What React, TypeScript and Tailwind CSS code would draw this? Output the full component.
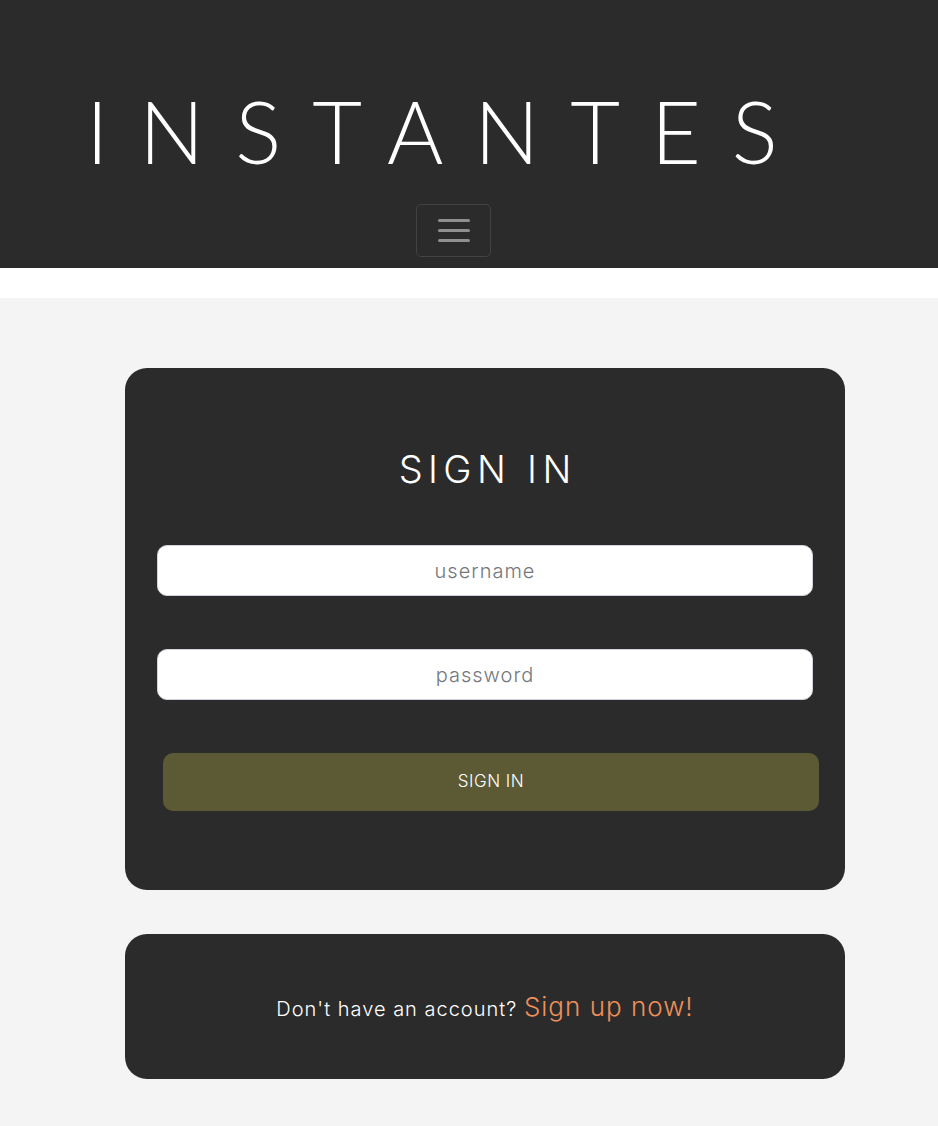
import React from "react";

export default function App() {
  const body = { fontFamily: "Inter, 'Noto Sans', sans-serif" };
  return (
    <div className="min-h-[1126px] bg-[#f4f4f4]" style={body}>
      <header className="h-[268px] bg-[#2b2b2b] flex flex-col">
        <div className="pt-[88px] pl-[86px]">
          <h1
            className="text-white text-[86px] leading-none font-light tracking-[0.36em] whitespace-nowrap"
            style={{ fontFamily: "Lato, Inter, sans-serif" }}
          >
            INSTANTES
          </h1>
        </div>
        <div className="flex justify-center pr-[31px] mt-auto mb-[11px]">
          <button className="w-[75px] h-[53px] rounded-[5px] border border-[#424242] flex flex-col items-center justify-center gap-[7px]">
            <span className="block w-[32px] h-[3px] rounded bg-[#8f8f8f]" />
            <span className="block w-[32px] h-[3px] rounded bg-[#8f8f8f]" />
            <span className="block w-[32px] h-[3px] rounded bg-[#8f8f8f]" />
          </button>
        </div>
      </header>
      <div className="h-[30px] bg-white" />
      <main className="pt-[70px] pl-[125px]">
        <section className="w-[720px] h-[522px] bg-[#2b2b2b] rounded-[22px] px-[32px] pt-[82px]">
          <h2 className="text-white text-center text-[38px] leading-none font-light tracking-[0.14em] pl-[0.14em]">
            SIGN IN
          </h2>
          <input
            placeholder="username"
            className="mt-[57px] block w-[656px] h-[51px] rounded-[10px] bg-white border border-[#ced4da] text-center text-[20px] font-light tracking-[0.05em] placeholder:text-[#74777c] outline-none"
          />
          <input
            placeholder="password"
            type="password"
            className="mt-[53px] block w-[656px] h-[51px] rounded-[10px] bg-white border border-[#ced4da] text-center text-[20px] font-light tracking-[0.05em] placeholder:text-[#74777c] outline-none"
          />
          <button className="mt-[53px] ml-[6px] block w-[656px] h-[58px] rounded-[10px] bg-[#5c5a34] text-white text-[17px] font-light tracking-[0.03em]">
            SIGN IN
          </button>
        </section>
        <section className="mt-[44px] w-[720px] h-[145px] bg-[#2b2b2b] rounded-[22px] flex items-center justify-center">
          <p className="text-white text-[20px] font-light tracking-[0.05em]">
            Don't have an account?{" "}
            <a className="text-[#f0905a] text-[26px]">Sign up now!</a>
          </p>
        </section>
      </main>
    </div>
  );
}
